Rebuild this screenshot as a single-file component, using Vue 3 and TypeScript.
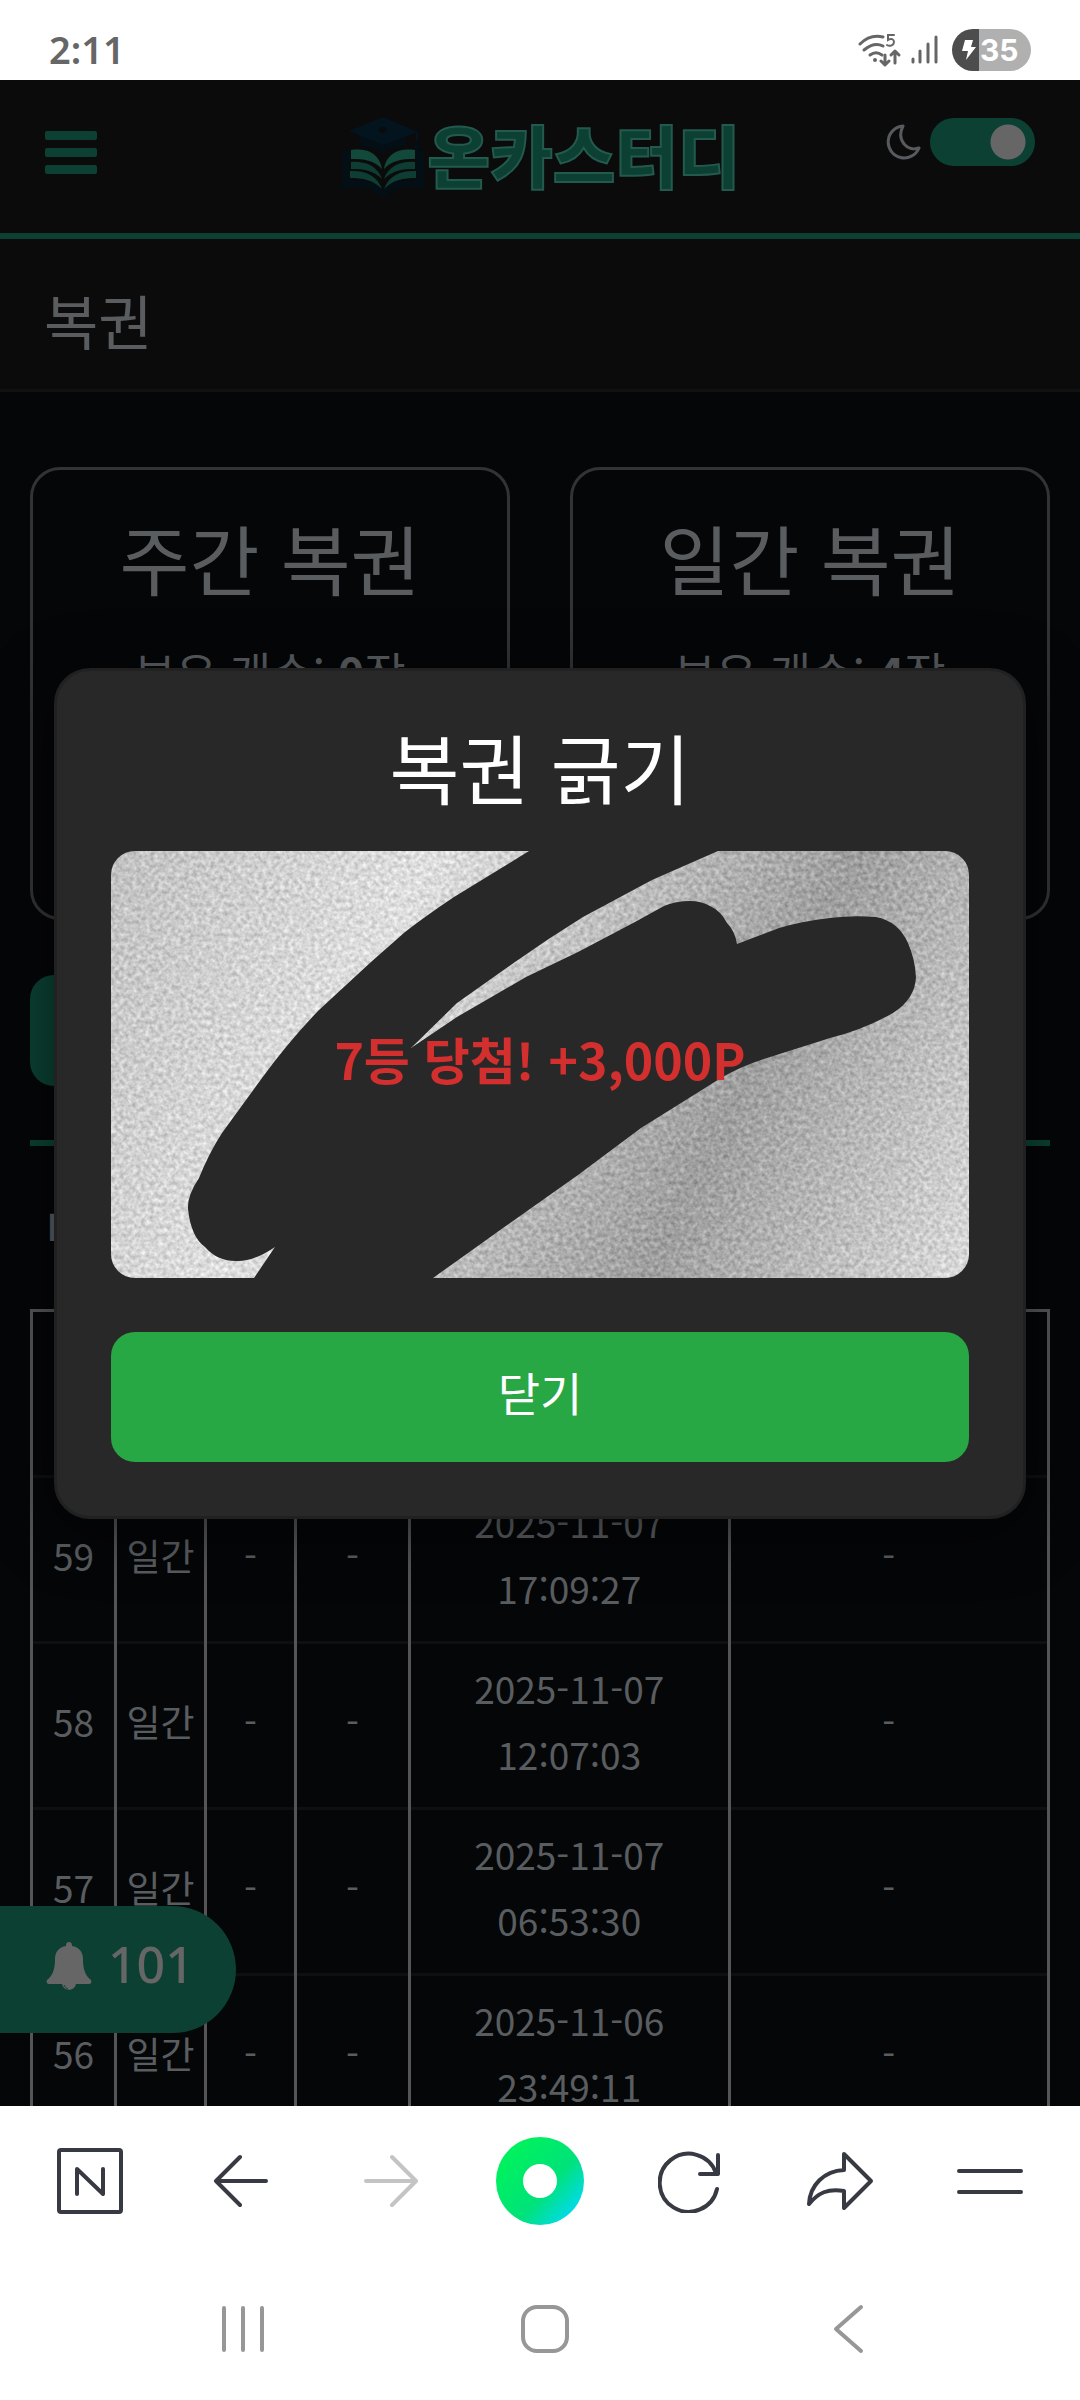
<script setup lang="ts">
import { ref } from 'vue'

interface HistoryRow {
  no: number
  kind: string
  rank: string
  prize: string
  date: string
  time: string
  note: string
}

interface Ticket {
  title: string
  count: number
}

const darkMode = ref(true)

const tickets: Ticket[] = [
  { title: '주간 복권', count: 0 },
  { title: '일간 복권', count: 4 },
]

const headings = ['번호', '구분', '등수', '당첨', '발급일', '사용일']

const rows: HistoryRow[] = [
  { no: 59, kind: '일간', rank: '-', prize: '-', date: '2025-11-07', time: '17:09:27', note: '-' },
  { no: 58, kind: '일간', rank: '-', prize: '-', date: '2025-11-07', time: '12:07:03', note: '-' },
  { no: 57, kind: '일간', rank: '-', prize: '-', date: '2025-11-07', time: '06:53:30', note: '-' },
  { no: 56, kind: '일간', rank: '-', prize: '-', date: '2025-11-06', time: '23:49:11', note: '-' },
]
</script>

<template>
  <div class="phone" lang="ko">
    <div class="status">
      <span class="clock">2:11</span>
      <div class="status-icons">
        <svg class="wifi" viewBox="0 0 44 34" width="44" height="34" fill="none" stroke="#666" stroke-width="3" stroke-linecap="round">
          <path d="M2 11C9 4 17 2 25 4" />
          <path d="M6 17c6-5 13-7 19-4" />
          <path d="M12 22c4-3 8-3 12 0" />
          <circle cx="17" cy="27" r="2" fill="#666" stroke="none" />
          <path d="M27 22v9M23 28l4 4 4-4" stroke-linejoin="round" />
          <path d="M37 30v-11M33 22l4-4 4 4" stroke-linejoin="round" />
          <path d="M36 2h-6v5c3-2 6-1 6 2s-4 5-7 3" stroke-width="2" />
        </svg>
        <svg class="signal" viewBox="0 0 28 30" width="28" height="30" stroke="#666" stroke-width="3" stroke-linecap="round">
          <path d="M3 24v3M10 16v11M18 9v18M26 2v25" />
        </svg>
        <div class="battery">
          <svg viewBox="0 0 14 22" width="14" height="22" fill="#fff">
            <path d="M3 1h8L9 8h5L4 21l2-9H0z" />
          </svg>
          <span>35</span>
        </div>
      </div>
    </div>

    <div class="page">
      <header class="top">
        <button class="burger" aria-label="메뉴"><i></i><i></i><i></i></button>
        <a class="logo" href="#">
          <svg viewBox="0 0 86 82" width="86" height="82" aria-hidden="true">
            <path d="M2 35l8-2v32c12-2 24 0 33 9 9-9 21-11 33-9V33l8 2v38c-14-3-28-2-36 5-3 5-7 5-10 0-8-7-22-8-36-5z" fill="#030e15" />
            <path d="M20 17v13c10 1 18 3 23 9 5-6 13-8 23-9V17z" fill="#030e15" />
            <path d="M43 1L9 15l34 14 35-13z" fill="#04141e" />
            <path d="M77 16v9" stroke="#04141e" stroke-width="2" />
            <path d="M77 23l4 9c-3 2-6 2-8 0z" fill="#030e15" />
            <ellipse cx="43" cy="14" rx="4" ry="3" fill="#080c0e" />
            <g fill="#12493a">
              <path d="M11 34c14-2 28 2 31 19-8-9-18-10-31-10z" />
              <path d="M75 34c-14-2-28 2-31 19 8-9 18-10 31-10z" />
            </g>
            <g fill="#0e3d33">
              <path d="M11 46c13-1 26 3 31 17-9-9-18-10-31-10z" />
              <path d="M75 46c-13-1-26 3-31 17 9-9 18-10 31-10z" />
              <path d="M10 55c14-1 27 4 32 18-9-9-19-11-32-11z" />
              <path d="M76 55c-14-1-27 4-32 18 9-9 19-11 32-11z" />
            </g>
          </svg>
          <span>온카스터디</span>
        </a>
        <label class="theme">
          <svg viewBox="0 0 36 36" width="36" height="36" fill="none" stroke="#575b5f" stroke-width="3" stroke-linejoin="round">
            <path d="M18 2A16 16 0 1 0 34 24C22 28 11 16 18 2z" />
          </svg>
          <input v-model="darkMode" type="checkbox" role="switch" aria-label="다크 모드" />
        </label>
      </header>

      <h1 class="page-title">복권</h1>

      <main class="body">
        <section class="tickets">
          <article v-for="t in tickets" :key="t.title" class="ticket">
            <h2>{{ t.title }}</h2>
            <p>보유 개수: <b>{{ t.count }}</b>장</p>
          </article>
        </section>

        <button class="refresh" aria-label="복권 교환"></button>
        <hr />
        <h3>내역</h3>

        <table>
          <colgroup>
            <col class="c-no" /><col class="c-sm" /><col class="c-sm" /><col class="c-md" /><col /><col />
          </colgroup>
          <thead>
            <tr><th v-for="h in headings" :key="h" scope="col" :aria-label="h"></th></tr>
          </thead>
          <tbody>
            <tr v-for="r in rows" :key="r.no">
              <td>{{ r.no }}</td>
              <td>{{ r.kind }}</td>
              <td>{{ r.rank }}</td>
              <td>{{ r.prize }}</td>
              <td>{{ r.date }}<br />{{ r.time }}</td>
              <td>{{ r.note }}</td>
            </tr>
          </tbody>
        </table>
      </main>

      <button class="alerts">
        <svg viewBox="0 0 46 50" width="46" height="50" fill="#666" aria-hidden="true">
          <path d="M23 1c2 0 3 1 3 4 7 1 11 6 11 13 0 12 3 17 8 21 1 2 0 4-2 4H3c-2 0-3-2-2-4 5-4 8-9 8-21C9 11 13 6 20 5c0-3 1-4 3-4z" />
          <path d="M16 42h14c0 9-14 9-14 0z" />
          <path d="M18 44c1 2 2 3 4 4" fill="none" stroke="#0b4033" />
        </svg>
        <span>101</span>
      </button>

      <div class="backdrop">
        <div class="modal" role="dialog" aria-modal="true" aria-labelledby="scratch-title">
          <h2 id="scratch-title">복권 긁기</h2>
          <svg class="scratch" viewBox="0 0 858 427">
            <defs>
              <linearGradient id="foil" gradientUnits="userSpaceOnUse" x1="0" y1="0" x2="858" y2="427">
                <stop offset="0" stop-color="#bebebe" />
                <stop offset="0.3" stop-color="#dcdcdc" />
                <stop offset="0.7" stop-color="#9c9c9c" />
                <stop offset="1" stop-color="#d8d8d8" />
              </linearGradient>
              <filter id="grain" x="0" y="0" width="100%" height="100%" color-interpolation-filters="sRGB">
                <feTurbulence type="fractalNoise" baseFrequency="0.23" numOctaves="2" seed="7" />
                <feColorMatrix values="1 0 0 0 0  1 0 0 0 0  1 0 0 0 0  0 0 0 0 1" />
                <feComposite in2="SourceGraphic" operator="arithmetic" k2="0.34" k3="1" k4="-0.16" />
              </filter>
            </defs>
            <rect width="858" height="427" fill="url(#foil)" filter="url(#grain)" />
            <path
              fill="#282828"
              d="M418 0L343 46Q316 64 294 81L260 111L208 159Q178 190 151 227L111 282Q98 302 88 327Q76 345 77 358Q80 386 94 396Q106 410 125 410Q142 411 164 396L143 427H322L392 377L467 324L530 277L610 227Q630 215 656 207L719 187Q752 179 782 162Q804 148 805 126Q804 108 797 92Q787 70 765 66Q742 64 719 67Q692 70 668 77L626 93Q624 80 616 72Q610 60 599 55Q590 50 579 50Q565 50 553 55L524 71L467 101L415 126L346 166L300 197L346 152L404 111Q438 87 472 66L541 29L607 0Z"
            />
            <text x="429" y="229" text-anchor="middle">7등 당첨! +3,000P</text>
          </svg>
          <button class="close">닫기</button>
        </div>
      </div>
    </div>

    <nav class="browser">
      <button aria-label="네이버 홈">
        <svg viewBox="0 0 68 68" width="68" height="68" fill="none" stroke="#373a42" stroke-width="4" stroke-linejoin="round" stroke-linecap="round">
          <rect x="3" y="3" width="62" height="62" rx="2" />
          <path d="M21 47V22l26 25V22" />
        </svg>
      </button>
      <button aria-label="뒤로">
        <svg viewBox="0 0 56 56" width="56" height="56" fill="none" stroke="#373a42" stroke-width="4" stroke-linejoin="round" stroke-linecap="round">
          <path d="M54 28H4M28 4L4 28l24 24" />
        </svg>
      </button>
      <button aria-label="앞으로" disabled>
        <svg viewBox="0 0 56 56" width="56" height="56" fill="none" stroke="#c4c4c4" stroke-width="4" stroke-linejoin="round" stroke-linecap="round">
          <path d="M4 28h50M30 4l24 24-24 24" />
        </svg>
      </button>
      <button aria-label="그린닷">
        <svg viewBox="0 0 88 88" width="88" height="88">
          <defs>
            <linearGradient id="dot" x1="0.2" y1="0.2" x2="0.88" y2="0.8">
              <stop offset="0" stop-color="#00f05f" />
              <stop offset="0.6" stop-color="#00e27a" />
              <stop offset="1" stop-color="#00dbe0" />
            </linearGradient>
          </defs>
          <circle cx="44" cy="44" r="44" fill="url(#dot)" />
          <circle cx="44" cy="44" r="17" fill="#fff" />
        </svg>
      </button>
      <button aria-label="새로고침">
        <svg viewBox="0 0 64 64" width="64" height="64" fill="none" stroke="#373a42" stroke-width="4" stroke-linecap="round">
          <path d="M59 40A29 29 0 1 1 58 24" />
          <path d="M60 6v19H42" stroke-linejoin="round" />
        </svg>
      </button>
      <button aria-label="공유">
        <svg viewBox="0 0 68 60" width="68" height="60" fill="none" stroke="#373a42" stroke-width="4" stroke-linejoin="round">
          <path d="M38 3l27 27-27 27V40C22 37 12 42 3 53 4 34 18 20 38 19z" />
        </svg>
      </button>
      <button aria-label="더보기">
        <svg viewBox="0 0 68 28" width="68" height="28" stroke="#373a42" stroke-width="4" stroke-linecap="round">
          <path d="M3 4h62M3 25h62" />
        </svg>
      </button>
    </nav>

    <nav class="system">
      <button aria-label="최근 앱">
        <svg viewBox="0 0 46 48" width="46" height="48" stroke="#979797" stroke-width="4" stroke-linecap="round">
          <path d="M4 3v42M23 3v42M42 3v42" />
        </svg>
      </button>
      <button aria-label="홈">
        <svg viewBox="0 0 50 50" width="50" height="50" fill="none" stroke="#979797" stroke-width="4">
          <rect x="3" y="3" width="44" height="44" rx="14" />
        </svg>
      </button>
      <button aria-label="뒤로 가기">
        <svg viewBox="0 0 32 50" width="32" height="50" fill="none" stroke="#979797" stroke-width="4" stroke-linecap="round" stroke-linejoin="round">
          <path d="M29 3L4 25l25 22" />
        </svg>
      </button>
    </nav>
  </div>
</template>

<style>
body {
  margin: 0;
}
</style>

<style scoped>
* {
  box-sizing: border-box;
}

.phone {
  display: flex;
  flex-direction: column;
  height: 100vh;
  background: #fff;
  color: #5a5d60;
  font-family: "Noto Sans CJK KR", sans-serif;
}

button {
  margin: 0;
  padding: 0;
  border: 0;
  background: none;
  color: inherit;
  font-family: inherit;
}

svg {
  display: block;
}

h1,
h2,
h3,
p {
  margin: 0;
  font-weight: 400;
}

.status {
  display: flex;
  justify-content: space-between;
  align-items: center;
  height: 80px;
  padding: 20px 49px 0;
}

.clock {
  padding-bottom: 3px;
  color: #666;
  font: 600 38px/40px "Noto Sans", sans-serif;
}

.status-icons {
  display: flex;
  align-items: center;
  gap: 8px;
}

.battery {
  display: flex;
  align-items: center;
  gap: 4px;
  height: 42px;
  width: 79px;
  margin-left: 6px;
  padding-left: 10px;
  border-radius: 21px;
  background: linear-gradient(90deg, #4d4d4d 27px, #b0b0b0 27px);
  color: #fff;
  font: 700 30px/42px Inter, sans-serif;
}

.page {
  position: relative;
  flex: 1;
  min-height: 0;
  overflow: hidden;
  background: #050608;
}

.top {
  display: grid;
  grid-template-columns: 1fr auto 1fr;
  align-items: center;
  height: 159px;
  padding: 0 45px;
  border-bottom: 6px solid #0b4033;
  background: #0b0b0b;
}

.burger {
  display: flex;
  flex-direction: column;
  gap: 8px;
  width: 52px;
  padding-bottom: 8px;
}

.burger i {
  height: 9px;
  border-radius: 2px;
  background: #0b4033;
}

.logo {
  display: flex;
  align-items: center;
  gap: 2px;
  color: #0b4033;
  font-size: 68px;
  font-weight: 900;
  line-height: 80px;
  text-decoration: none;
  -webkit-text-stroke: 2px #235a4d;
}

.logo span {
  padding-bottom: 6px;
}

.theme {
  display: flex;
  align-self: start;
  align-items: center;
  justify-self: end;
  gap: 9px;
  margin-top: 38px;
}

.theme input {
  width: 105px;
  height: 48px;
  margin: 0;
  border-radius: 24px;
  appearance: none;
  background: radial-gradient(circle at 78px 24px, #666 17px, #0b4033 18px);
}

.page-title {
  height: 153px;
  padding: 9px 44px 0;
  border-bottom: 3px solid #111;
  background: #0b0b0b;
  font-size: 59px;
  line-height: 144px;
}

.body {
  padding: 75px 30px 0;
}

.tickets {
  display: flex;
  gap: 60px;
}

.ticket {
  flex: 1;
  height: 453px;
  padding-top: 32px;
  border: 3px solid #333;
  border-radius: 30px;
  text-align: center;
}

.ticket h2 {
  font-size: 76px;
  line-height: 110px;
}

.ticket p {
  margin-top: 26px;
  font-size: 45px;
  line-height: 68px;
}

.refresh {
  display: block;
  width: 50%;
  height: 111px;
  margin-top: 55px;
  border-radius: 24px;
  background: #0b4033;
}

hr {
  height: 6px;
  margin: 54px 0 0;
  border: 0;
  background: #0b4033;
}

h3 {
  height: 163px;
  padding: 0 16px;
  font-size: 46px;
  font-weight: 500;
  line-height: 163px;
}

table {
  width: 100%;
  border: 3px solid #555;
  border-collapse: collapse;
  table-layout: fixed;
  font-size: 37px;
  line-height: 66px;
  text-align: center;
}

.c-no {
  width: 84px;
}

.c-sm {
  width: 90px;
}

.c-md {
  width: 114px;
}

th,
td {
  height: 166px;
  padding: 0 0 10px;
  border: solid #555;
  border-width: 0 3px;
  font-weight: 400;
}

tbody tr {
  border-top: 3px solid #0e0f10;
}

.alerts {
  position: absolute;
  left: 0;
  bottom: 73px;
  display: flex;
  align-items: center;
  gap: 16px;
  width: 236px;
  height: 127px;
  padding: 0 0 8px 46px;
  border-radius: 0 64px 64px 0;
  background: #0b4033;
  color: #666;
  font: 500 50px/60px "Noto Sans", sans-serif;
}

.alerts span {
  padding-bottom: 4px;
}

.backdrop {
  position: absolute;
  inset: 0;
  display: flex;
  align-items: center;
  justify-content: center;
}

.modal {
  width: 90%;
  padding: 54px;
  border: 3px solid #212121;
  border-radius: 36px;
  background: #282828;
  box-shadow: 0 12px 60px rgb(0 0 0 / 50%);
  color: #fff;
}

.modal h2 {
  margin-bottom: 44px;
  font-size: 76px;
  line-height: 82px;
  text-align: center;
}

.scratch {
  width: 100%;
  border-radius: 24px;
}

.scratch text {
  fill: #d32f2f;
  font-size: 50px;
  font-weight: 700;
}

.close {
  display: block;
  width: 100%;
  height: 130px;
  margin-top: 54px;
  padding-bottom: 12px;
  border-radius: 24px;
  background: #28a745;
  font-size: 46px;
}

.browser {
  display: flex;
  align-items: center;
  height: 150px;
  padding: 0 15px;
}

.browser button {
  display: flex;
  flex: 1;
  justify-content: center;
}

.system {
  display: flex;
  align-items: center;
  height: 144px;
  padding: 2px 81px 0 92px;
}

.system button {
  display: flex;
  flex: 1;
  justify-content: center;
}
</style>
